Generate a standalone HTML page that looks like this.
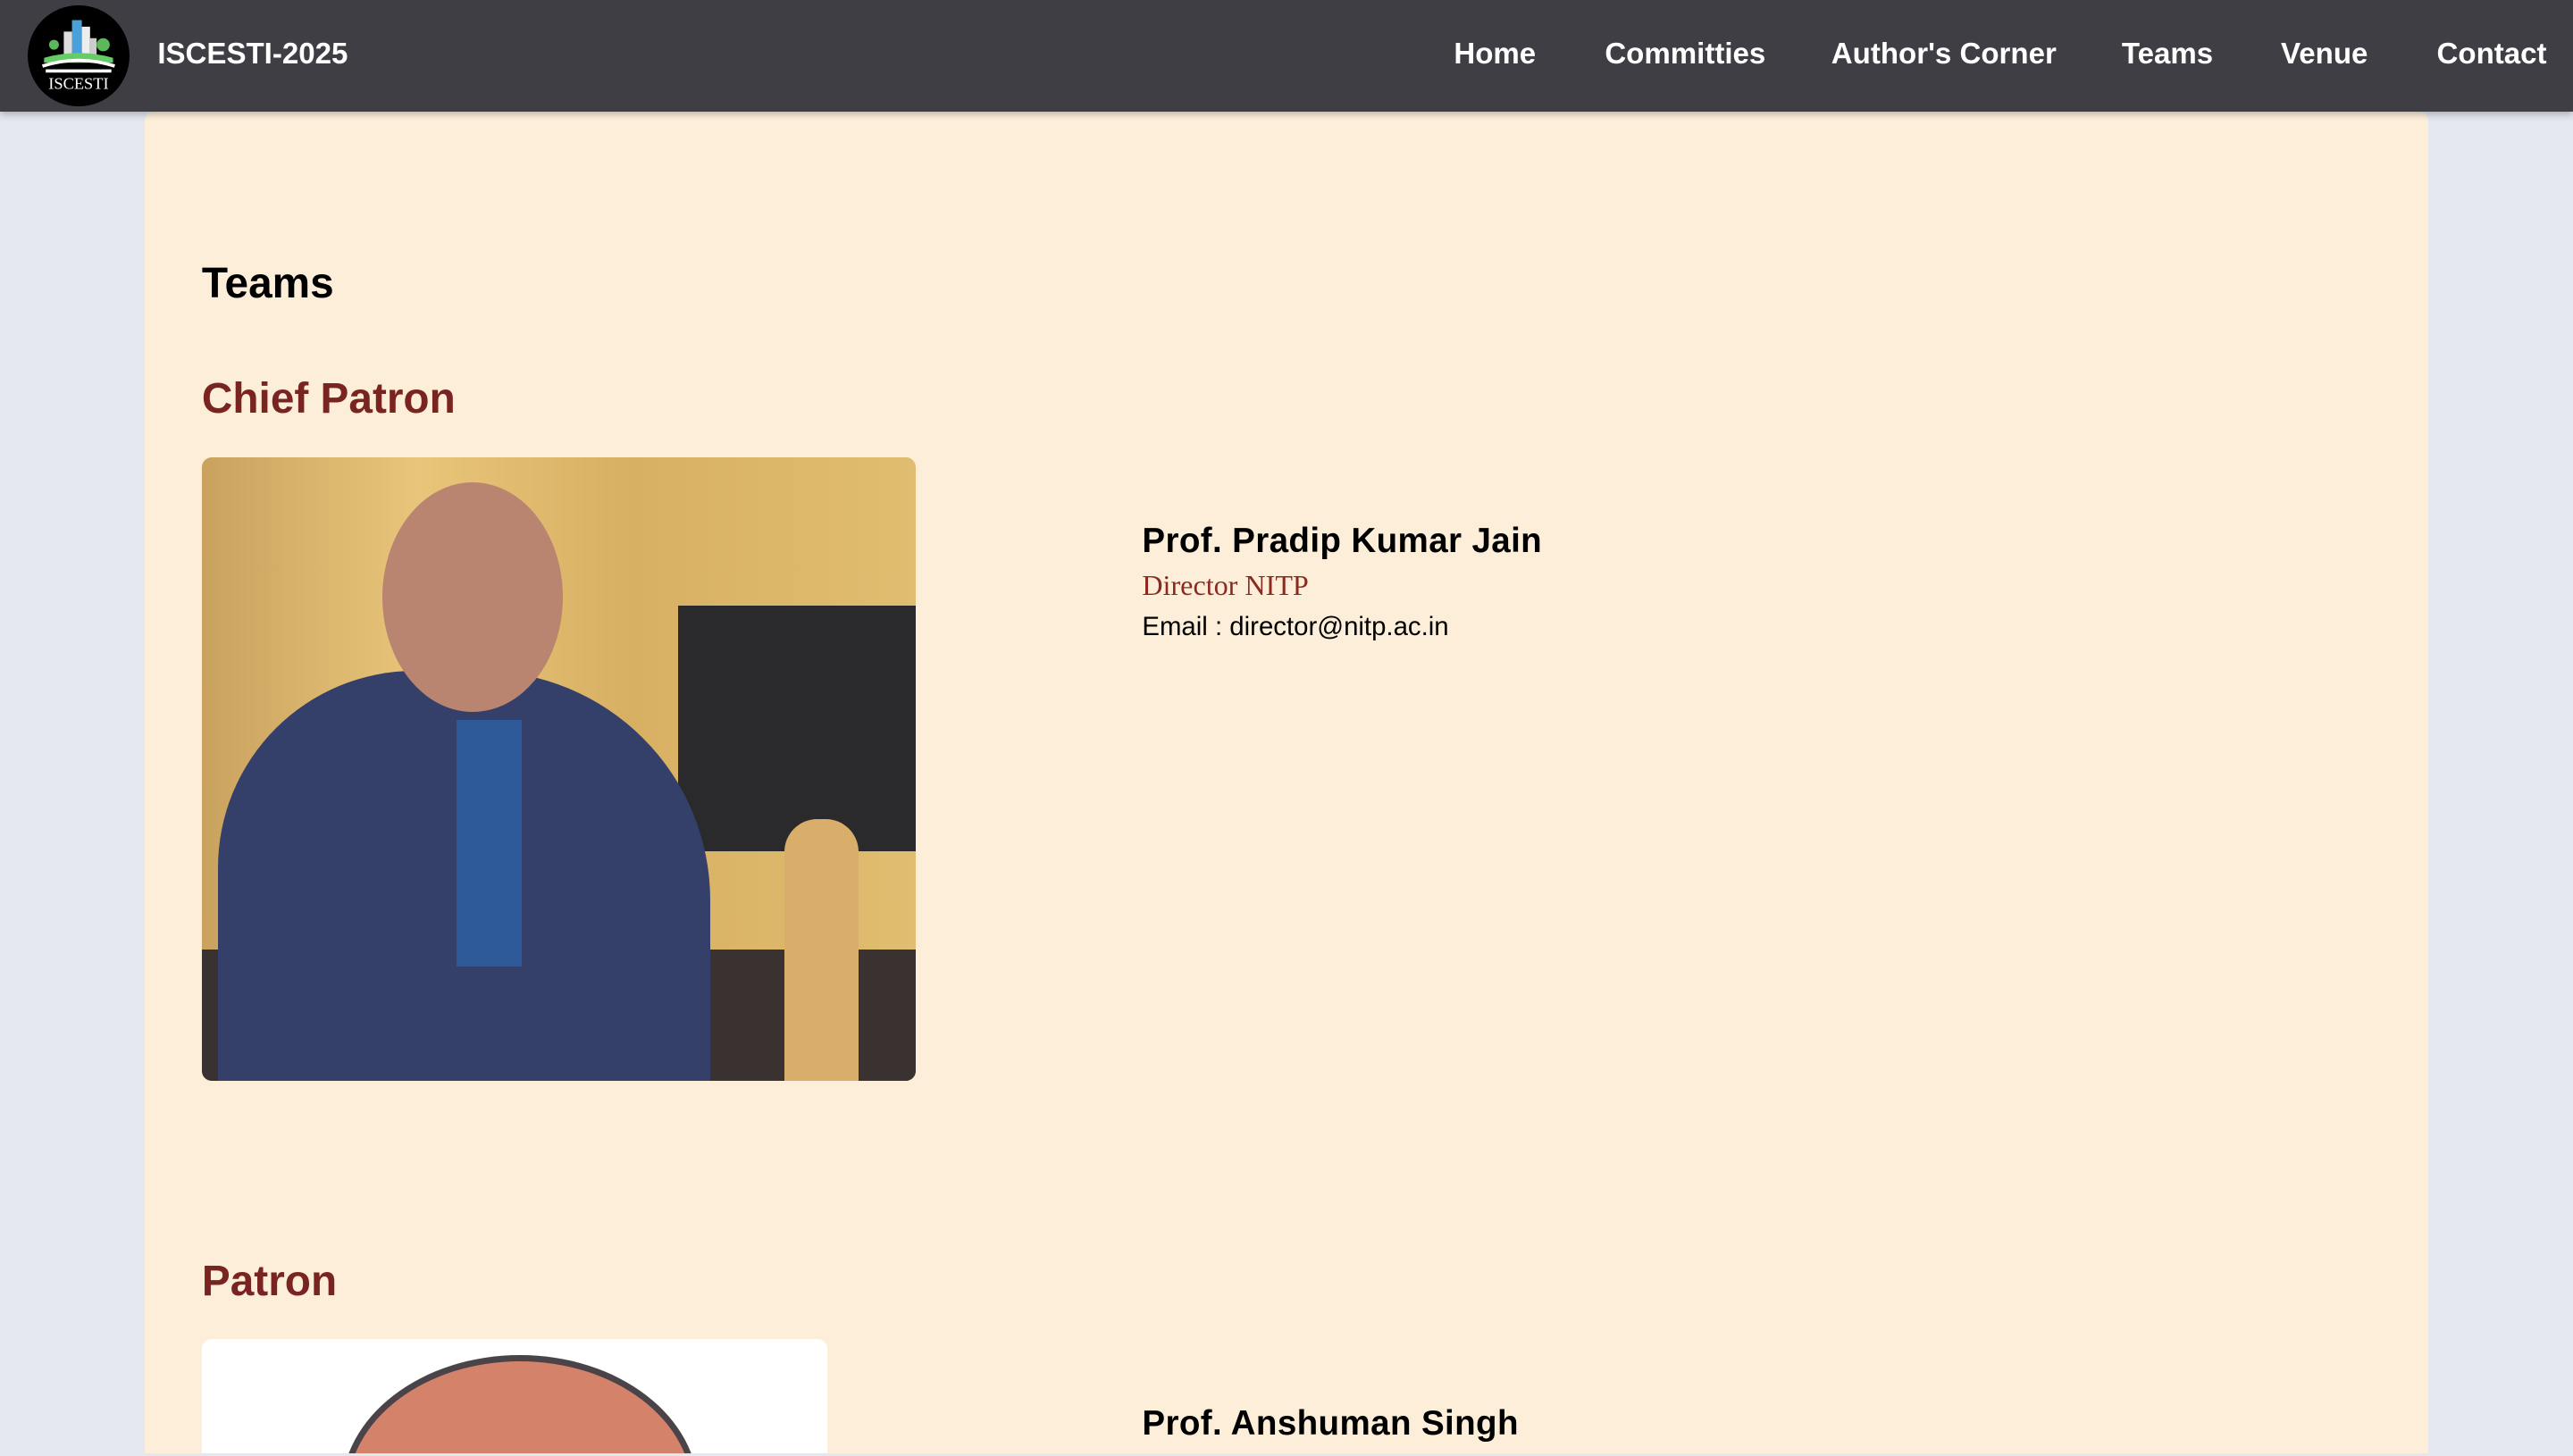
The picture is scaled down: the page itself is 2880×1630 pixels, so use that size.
<!DOCTYPE html>
<html><head><meta charset="utf-8"><style>
html{margin:0;padding:0;width:2880px;height:1630px;overflow:hidden}
body{margin:0;padding:0;width:1568px;height:886px;overflow:hidden;zoom:1.836735;background:#e4e7ee;font-family:"Liberation Sans",Arial,sans-serif;position:relative}
.nav{position:absolute;left:0;top:0;width:1568px;height:68px;background:#3f3e45;box-shadow:0 2px 4px rgba(0,0,0,.25);z-index:2}
.logo{position:absolute;left:17px;top:3px;width:62px;height:62px;border-radius:50%;background:#000;overflow:hidden}
.brand{position:absolute;left:96px;top:23px;color:#fff;font-weight:bold;font-size:18px}
.nav a{position:absolute;top:23px;color:#fff;font-weight:bold;font-size:18px;text-decoration:none}
.card{position:absolute;left:88px;top:68px;width:1392px;height:818px;background:#fdeed9;border-radius:6px 6px 0 0}
h1{position:absolute;left:123px;top:158px;margin:0;font-size:26px;font-weight:bold;color:#000}
h2{position:absolute;left:123px;margin:0;font-size:26px;font-weight:bold;color:#7a2422}
.name{position:absolute;left:696px;font-size:21px;font-weight:bold;margin:0;letter-spacing:.2px}
.role{position:absolute;left:696px;top:347px;font-family:"Liberation Serif",serif;color:#8a2a20;font-size:17.5px}
.email{position:absolute;left:696px;top:373px;font-size:16px}
</style></head><body>
<div class="nav">
 <div class="logo"><svg width="62" height="62" viewBox="0 0 62 62">
  <rect x="27" y="9" width="6" height="22" fill="#4aa0d8"/><rect x="33" y="13" width="5" height="18" fill="#eee"/>
  <rect x="22" y="16" width="5" height="15" fill="#ddd"/><rect x="38" y="20" width="4" height="11" fill="#ccc"/>
  <circle cx="46" cy="24" r="4" fill="#5cb85c"/><circle cx="16" cy="24" r="3" fill="#5cb85c"/>
  <path d="M10 32 Q31 26 52 32 L52 35 L10 35Z" fill="#6c6"/>
  <path d="M9 37 Q31 30 53 37" stroke="#fff" stroke-width="2" fill="none"/>
  <path d="M11 40 L51 40" stroke="#fff" stroke-width="2"/>
  <text x="31" y="51" font-family="Liberation Serif" font-size="10" fill="#fff" text-anchor="middle">ISCESTI</text></svg></div>
 <div class="brand">ISCESTI-2025</div>
 <a style="left:886px">Home</a><a style="left:978px">Committies</a><a style="left:1116px">Author's Corner</a><a style="left:1293px">Teams</a><a style="left:1390px">Venue</a><a style="left:1485px">Contact</a>
</div>
<div class="card"></div>
<h1>Teams</h1>
<h2 style="top:228px">Chief Patron</h2>
<div style="position:absolute;left:123px;top:279px;width:435px;height:380px;border-radius:6px;overflow:hidden;background:linear-gradient(90deg,#c9a25e,#e8c57a 30%,#d8b063 60%,#e0bd70)">
 <div style="position:absolute;left:290px;top:90px;width:145px;height:150px;background:#2a2a2c"></div>
 <div style="position:absolute;left:0;top:300px;width:435px;height:80px;background:#3a3230"></div>
 <div style="position:absolute;left:10px;top:130px;width:300px;height:270px;border-radius:120px 140px 0 0;background:#34406a"></div>
 <div style="position:absolute;left:110px;top:15px;width:110px;height:140px;border-radius:50%;background:#b98470"></div>
 <div style="position:absolute;left:155px;top:160px;width:40px;height:150px;background:#2e5a9a"></div>
 <div style="position:absolute;left:355px;top:220px;width:45px;height:160px;background:#d9ae6a;border-radius:20px 20px 0 0"></div>
</div>
<p class="name" style="top:318px">Prof. Pradip Kumar Jain</p>
<div class="role">Director NITP</div>
<div class="email">Email : director@nitp.ac.in</div>
<h2 style="top:766px">Patron</h2>
<div style="position:absolute;left:123px;top:816px;width:381px;height:70px;border-radius:6px 6px 0 0;overflow:hidden;background:#fff">
 <div style="position:absolute;left:85px;top:10px;width:210px;height:160px;border-radius:50%;background:#d5826b;border:4px solid #4a4448"></div>
</div>
<p class="name" style="top:856px">Prof. Anshuman Singh</p>
</body></html>
